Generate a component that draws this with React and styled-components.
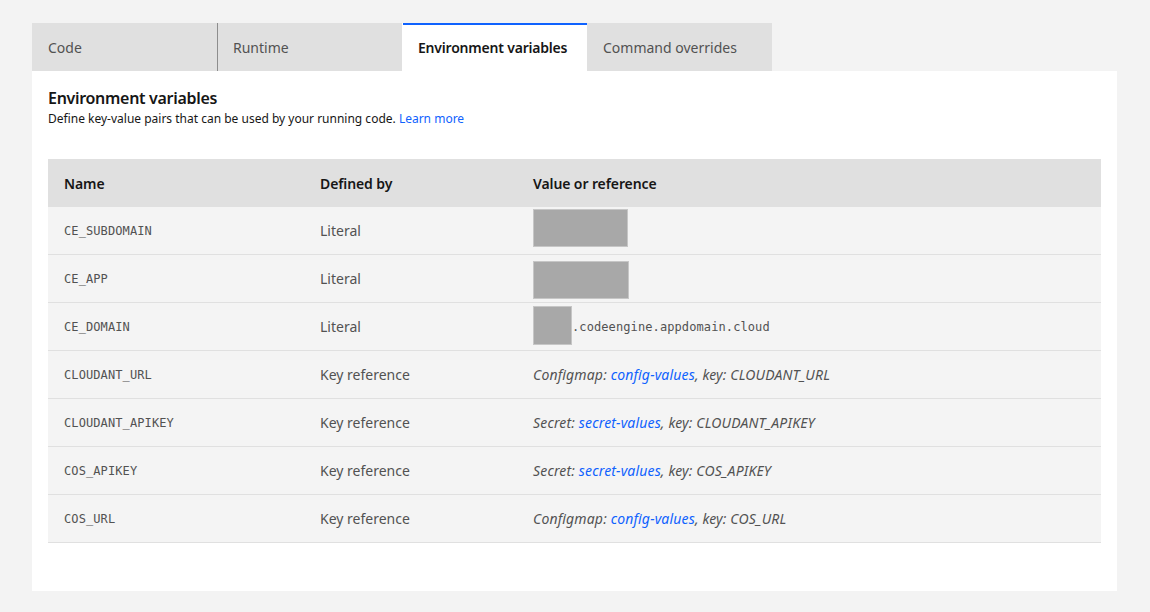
import React from "react";
import styled, { createGlobalStyle } from "styled-components";

const GlobalStyle = createGlobalStyle`
  html, body { margin: 0; padding: 0; background: #f3f3f3; }
  body { font-family: "Noto Sans", "Liberation Sans", sans-serif; color: #161616; }
  * { box-sizing: border-box; }
`;

const Page = styled.div`
  padding: 23px 33px 22px 32px;
  min-height: 612px;
`;

const TabList = styled.div`
  display: flex;
`;

const Tab = styled.div`
  width: 185px;
  height: 48px;
  display: flex;
  align-items: center;
  padding-left: 15px;
  font-size: 14px;
  border-left: 1px solid ${(p) => (p.$divider ? "#8d8d8d" : "transparent")};
  background: ${(p) => (p.$active ? "#ffffff" : "#e0e0e0")};
  color: ${(p) => (p.$active ? "#161616" : "#525252")};
  font-weight: ${(p) => (p.$active ? 600 : 400)};
  letter-spacing: ${(p) => (p.$active ? "-0.2px" : "0")};
  box-shadow: ${(p) => (p.$active ? "inset 0 2px 0 #0f62fe" : "none")};
`;

const Panel = styled.div`
  background: #ffffff;
  width: 1085px;
  padding: 16px 16px 48px;
`;

const Title = styled.h2`
  margin: 0;
  font-size: 16px;
  line-height: 22px;
  font-weight: 600;
  letter-spacing: -0.3px;
  color: #161616;
`;

const Description = styled.p`
  margin: 2px 0 32px;
  font-size: 12px;
  line-height: 16px;
  color: #161616;
`;

const Link = styled.a`
  color: #0f62fe;
  text-decoration: none;
`;

const Table = styled.div`
  display: grid;
  grid-template-columns: 256px 213px 1fr;
`;

const HeaderCell = styled.div`
  height: 48px;
  background: #e0e0e0;
  display: flex;
  align-items: center;
  padding-left: 16px;
  font-size: 14px;
  font-weight: 600;
  letter-spacing: -0.1px;
  color: #161616;
`;

const Cell = styled.div`
  height: 48px;
  background: #f4f4f4;
  border-bottom: 1px solid #e0e0e0;
  display: flex;
  align-items: center;
  padding-left: 16px;
  font-size: 14px;
  color: #525252;
`;

const Code = styled.span`
  font-family: "DejaVu Sans Mono", "Liberation Mono", monospace;
  font-size: 12px;
  letter-spacing: 0.1px;
  color: #525252;
`;

const Redacted = styled.span`
  display: inline-block;
  width: ${(p) => p.$w}px;
  height: ${(p) => p.$h}px;
  background: #a8a8a8;
  border: 1px solid #c6c6c6;
  margin-top: ${(p) => p.$mt || 0}px;
`;

const Ref = styled.span`
  font-style: italic;
  letter-spacing: 0.16px;
  color: #525252;
`;

const rows = [
  { name: "CE_SUBDOMAIN", by: "Literal", value: { box: [95, 38, -6] } },
  { name: "CE_APP", by: "Literal", value: { box: [96, 38, 2] } },
  { name: "CE_DOMAIN", by: "Literal", value: { box: [39, 39, -2], suffix: ".codeengine.appdomain.cloud" } },
  { name: "CLOUDANT_URL", by: "Key reference", value: { kind: "Configmap", link: "config-values", key: "CLOUDANT_URL" } },
  { name: "CLOUDANT_APIKEY", by: "Key reference", value: { kind: "Secret", link: "secret-values", key: "CLOUDANT_APIKEY" } },
  { name: "COS_APIKEY", by: "Key reference", value: { kind: "Secret", link: "secret-values", key: "COS_APIKEY" } },
  { name: "COS_URL", by: "Key reference", value: { kind: "Configmap", link: "config-values", key: "COS_URL" } },
];

function Value({ value }) {
  if (value.box) {
    const [w, h, mt] = value.box;
    return (
      <>
        <Redacted $w={w} $h={h} $mt={mt} />
        {value.suffix && <Code>{value.suffix}</Code>}
      </>
    );
  }
  return (
    <Ref>
      {value.kind}: <Link href="#">{value.link}</Link>, key: {value.key}
    </Ref>
  );
}

export default function App() {
  return (
    <>
      <GlobalStyle />
      <Page>
        <TabList>
          <Tab>Code</Tab>
          <Tab $divider>Runtime</Tab>
          <Tab $active>Environment variables</Tab>
          <Tab>Command overrides</Tab>
        </TabList>
        <Panel>
          <Title>Environment variables</Title>
          <Description>
            Define key-value pairs that can be used by your running code. <Link href="#">Learn more</Link>
          </Description>
          <Table>
            <HeaderCell>Name</HeaderCell>
            <HeaderCell>Defined by</HeaderCell>
            <HeaderCell>Value or reference</HeaderCell>
            {rows.map((r) => (
              <React.Fragment key={r.name}>
                <Cell>
                  <Code>{r.name}</Code>
                </Cell>
                <Cell>{r.by}</Cell>
                <Cell>
                  <Value value={r.value} />
                </Cell>
              </React.Fragment>
            ))}
          </Table>
        </Panel>
      </Page>
    </>
  );
}
